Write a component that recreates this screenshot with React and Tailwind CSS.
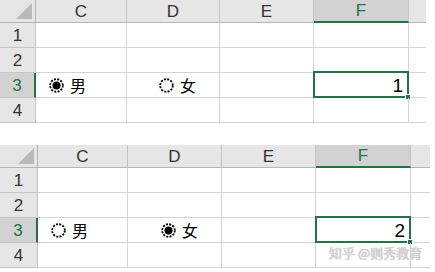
import { useState } from "react";

const columns = ["C", "D", "E", "F"];
const rows = [1, 2, 3, 4];

function Radio({ checked }) {
    return (
        <svg width="15" height="15" viewBox="0 0 15 15" className="shrink-0">
            <circle
                cx="7.5"
                cy="7.5"
                r="6.3"
                fill="white"
                stroke="#000"
                strokeWidth="1.8"
                strokeDasharray="2 1.3"
            />
            {checked && <circle cx="7.5" cy="7.5" r="4" fill="#000" />}
        </svg>
    );
}

function Sheet({ gridClass, choice, value, cPad, dPad }) {
    return (
        <div className={`grid ${gridClass}`}>
            {/* header row */}
            <div className="flex h-[23px] items-end justify-end border-r border-b border-[#b5b5b5] bg-[#e6e6e6] pr-[3px] pb-[3px]">
                <svg width="16" height="16" viewBox="0 0 16 16">
                    <polygon points="16,0 16,16 0,16" fill="#b9b9b9" />
                </svg>
            </div>
            {columns.map((col) => (
                <div
                    key={col}
                    className={
                        col === "F"
                            ? "flex h-[23px] items-center justify-center border-r border-[#c4c4c4] border-b-2 border-b-[#217346] bg-[#d2d2d2] font-['Liberation_Sans',sans-serif] text-[17px] leading-[19px] text-[#217346]"
                            : "flex h-[23px] items-center justify-center border-r border-b border-r-[#c4c4c4] border-b-[#b5b5b5] bg-[#e6e6e6] font-['Liberation_Sans',sans-serif] text-[17px] leading-[19px] text-[#333]"
                    }
                >
                    {col}
                </div>
            ))}
            <div className="h-[23px] border-b border-[#b5b5b5] bg-[#e6e6e6]" />

            {rows.map((row) => (
                <RowCells
                    key={row}
                    row={row}
                    choice={choice}
                    value={value}
                    cPad={cPad}
                    dPad={dPad}
                />
            ))}
        </div>
    );
}

function RowCells({ row, choice, value, cPad, dPad }) {
    const active = row === 3;

    return (
        <>
            <div
                className={
                    active
                        ? "flex h-[25px] items-center justify-center border-r-2 border-b border-r-[#217346] border-b-[#c4c4c4] bg-[#d2d2d2] font-['Liberation_Sans',sans-serif] text-[17px] leading-[19px] text-[#217346]"
                        : "flex h-[25px] items-center justify-center border-r border-b border-[#c4c4c4] bg-[#e6e6e6] font-['Liberation_Sans',sans-serif] text-[17px] leading-[19px] text-[#333]"
                }
            >
                {row}
            </div>

            <div className={`flex h-[25px] items-center border-r border-b border-[#d4d4d4] ${cPad}`}>
                {active && (
                    <>
                        <Radio checked={choice === "男"} />
                        <span className="ml-[6px] text-[16px] leading-none text-black">男</span>
                    </>
                )}
            </div>

            <div className={`flex h-[25px] items-center border-r border-b border-[#d4d4d4] ${dPad}`}>
                {active && (
                    <>
                        <Radio checked={choice === "女"} />
                        <span className="ml-[6px] text-[16px] leading-none text-black">女</span>
                    </>
                )}
            </div>

            <div className="h-[25px] border-r border-b border-[#d4d4d4]" />

            <div className="relative h-[25px] border-r border-b border-[#d4d4d4]">
                {active && (
                    <div className="absolute -top-[2px] -left-[1px] -right-[1px] -bottom-[1px] flex items-center justify-end border-2 border-[#217346] pr-[4px] font-['Liberation_Sans',sans-serif] text-[19px] leading-[20px] text-black">
                        <span className="mt-[2px]">{value}</span>
                        <div className="absolute -right-[4px] -bottom-[4px] h-[6px] w-[6px] border border-white bg-[#217346]" />
                    </div>
                )}
            </div>

            <div className="h-[25px] border-b border-[#d4d4d4]" />
        </>
    );
}

export default function App() {
    const [sheets] = useState([
        { choice: "男", value: 1 },
        { choice: "女", value: 2 },
    ]);

    return (
        <div className="relative h-[272px] w-[435px] overflow-hidden bg-white font-['Noto_Sans_CJK_SC','Liberation_Sans',sans-serif]">
            <Sheet
                gridClass="grid-cols-[36px_91px_93px_94px_95px_17px]"
                choice={sheets[0].choice}
                value={sheets[0].value}
                cPad="pl-[13px]"
                dPad="pl-[32px]"
            />

            <div className="mt-[22px]">
                <Sheet
                    gridClass="grid-cols-[38px_90px_94px_94px_95px_19px]"
                    choice={sheets[1].choice}
                    value={sheets[1].value}
                    cPad="pl-[13px]"
                    dPad="pl-[33px]"
                />
            </div>

            <div className="absolute left-[329px] top-[246px] whitespace-nowrap text-[13px] leading-none text-[#dadada] [text-shadow:0_0_1px_#8a8a8a]">
                知乎 @则秀教育
            </div>
        </div>
    );
}
